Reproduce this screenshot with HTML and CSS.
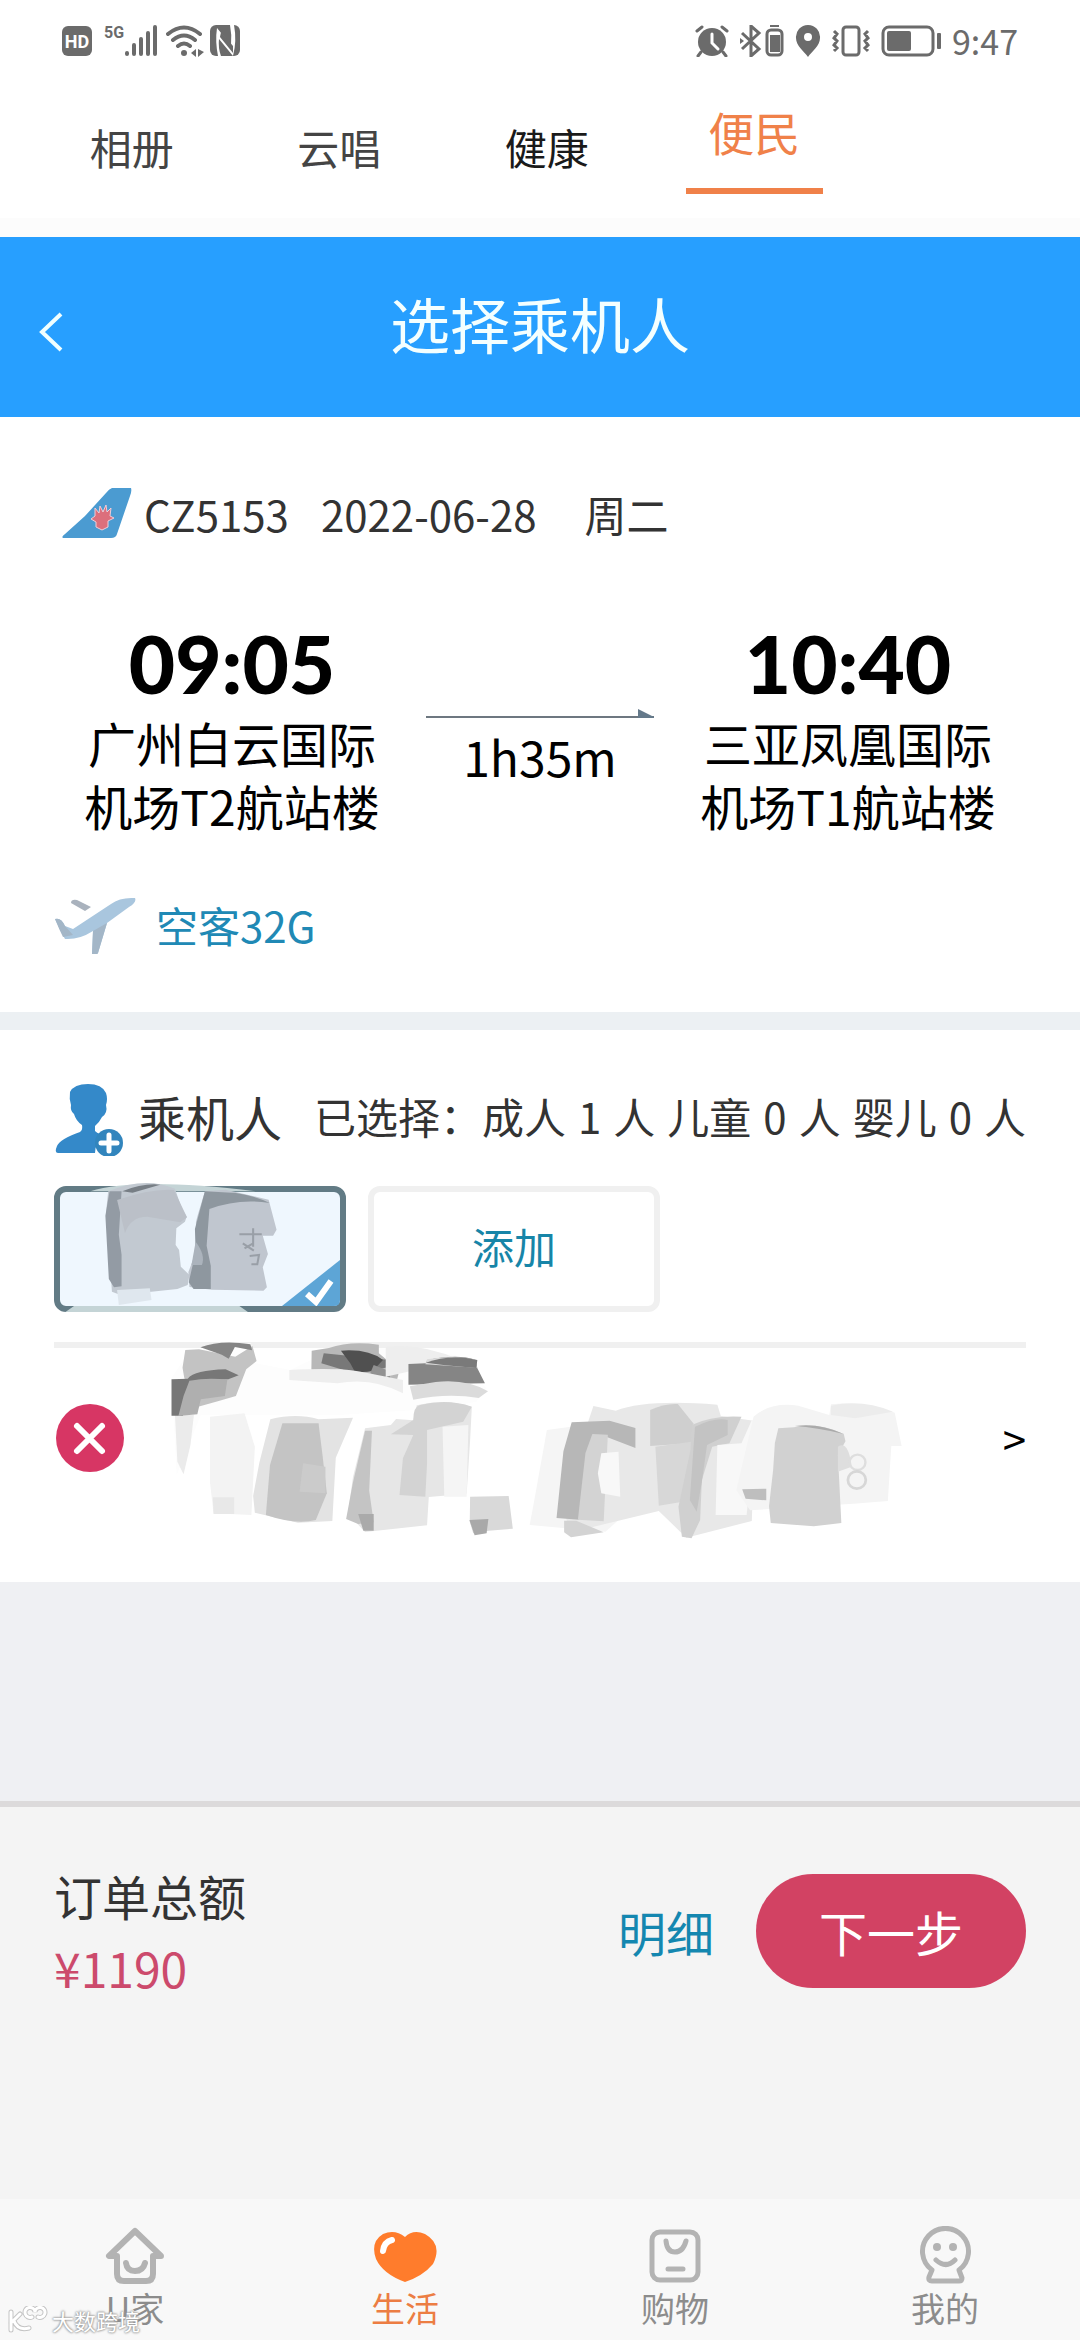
FILE: index.html
```html
<!DOCTYPE html>
<html lang="zh-CN">
<head>
<meta charset="utf-8">
<meta name="viewport" content="width=device-width">
<title>选择乘机人</title>
<link rel="stylesheet" href="styles.css">
</head>
<body>
<div class="status">
  <div class="status-left">
    <span class="hd">HD</span>
    <span class="net">5G</span>
    <svg class="signal" width="34" height="32" viewBox="0 0 34 32"><path d="M3 28v1M10 20v9M17 14v15M24 8v21M31 2v27" fill="none" stroke="#6b6b6b" stroke-width="4" stroke-linecap="round"/></svg>
    <svg class="wifi" width="38" height="32" viewBox="0 0 38 32"><g fill="none" stroke="#6b6b6b" stroke-width="4" stroke-linecap="round"><path d="M2 9Q18-4 34 9M7 15Q18 6 29 15M12 21Q18 16 24 21"/></g><circle cx="18" cy="28" r="3" fill="#6b6b6b"/><path d="M30 24v8l-5-4zM32 24v8l6-5z" fill="#6b6b6b"/></svg>
    <svg width="30" height="32" viewBox="0 0 30 32"><rect width="30" height="31" rx="6" fill="#6b6b6b"/><path d="M8 31Q5 16 7 3l14 17Q22 10 20 0l4 0q3 16-1 31L9 14q-1 9 2 17z" fill="#fff"/><path d="M11 7l12 14v7L10 12z" fill="#6b6b6b"/></svg>
  </div>
  <div class="status-right">
    <svg width="34" height="32" viewBox="0 0 34 32"><circle cx="17" cy="17" r="14" fill="#6b6b6b"/><path d="M2 6l5-4M32 6l-5-4M6 27l-3 4M28 27l3 4" stroke="#6b6b6b" stroke-width="3" stroke-linecap="round"/><path d="M17 9v9l6 6" fill="none" stroke="#fff" stroke-width="3" stroke-linecap="round"/></svg>
    <svg width="44" height="32" viewBox="0 0 44 32"><path d="M2 8l17 16-8 7V1l8 7L2 24" fill="none" stroke="#6b6b6b" stroke-width="3"/><path d="M0 13l4 3-4 3z" fill="#6b6b6b"/><rect x="27" y="5" width="15" height="25" rx="4" fill="none" stroke="#6b6b6b" stroke-width="3"/><path d="M30 1h9M31 11h8v15h-8z" fill="#6b6b6b" stroke="#6b6b6b" stroke-width="2"/></svg>
    <svg width="26" height="32" viewBox="0 0 26 32"><path fill-rule="evenodd" d="M13 0a12 12 0 0 1 12 13c0 8-8 13-12 19C9 26 1 21 1 13A12 12 0 0 1 13 0zm0 8a4 4 0 1 0 0 8 4 4 0 0 0 0-8z" fill="#6b6b6b"/></svg>
    <svg width="38" height="32" viewBox="0 0 38 32"><rect x="11" y="2" width="16" height="28" rx="3" fill="none" stroke="#6b6b6b" stroke-width="3"/><path d="M2 6l3 3-3 4 3 3-3 4 3 3-3 3M36 6l-3 3 3 4-3 3 3 4-3 3 3 3" fill="none" stroke="#6b6b6b" stroke-width="3"/></svg>
    <svg width="60" height="32" viewBox="0 0 60 32"><rect x="2" y="2" width="50" height="28" rx="6" fill="none" stroke="#6b6b6b" stroke-width="3"/><rect x="6" y="6" width="24" height="20" rx="2" fill="#6b6b6b"/><rect x="56" y="8" width="4" height="16" rx="1" fill="#6b6b6b"/></svg>
    <span class="clock">9:47</span>
  </div>
</div>

<nav class="tabs">
  <a class="tab" href="#album">相册</a>
  <a class="tab" href="#sing">云唱</a>
  <a class="tab tab-dark" href="#health">健康</a>
  <a class="tab tab-active" href="#service">便民</a>
</nav>

<header class="header">
  <button class="back" type="button" aria-label="返回"><svg width="26" height="40" viewBox="0 0 26 40"><path d="M23 2L4 20l19 18" fill="none" stroke="#f0ffff" stroke-width="4"/></svg></button>
  <h1>选择乘机人</h1>
</header>

<section class="flight">
  <div class="flight-no">
    <svg width="70" height="50" viewBox="0 0 70 50"><path d="M50 0h19q1 3-1 8L55 46q-1 4-6 4H1q-2-1 2-4l20-18L44 5q3-4 6-5z" fill="#4b9bd1"/><path d="M33 20l4 5 1-7 3 6 3-7 1 7 4-4-1 8 4 2-6 3v6l-6 3-6-3v-5l-5-3 4-3z" fill="#dc6f7c" stroke="#f0cdd8" stroke-width="1"/></svg>
    <span>CZ5153</span><time class="date">2022-06-28</time><span>周二</span>
  </div>
  <div class="route">
    <div class="stop"><strong>09:05</strong><p>广州白云国际<br>机场T2航站楼</p></div>
    <div class="leg">
      <div class="arrow"><svg width="16" height="9" viewBox="0 0 16 9"><path d="M0 0l16 8v1H0z" fill="#64798a"/></svg></div>
      <span>1h35m</span>
    </div>
    <div class="stop"><strong>10:40</strong><p>三亚凤凰国际<br>机场T1航站楼</p></div>
  </div>
  <div class="plane">
    <svg width="82" height="60" viewBox="0 0 82 60"><path d="M17 9q0-4 6-3l14 7-6 4z" fill="#a9b2bd"/><path d="M1 25q6-2 10 7l8 3L57 10Q66 3 81 4q2 4-6 9L53 29 44 59q-3 4-6 1l1-23q-14 9-28 8Q6 36 1 25z" fill="#a9c6de"/><path d="M39 37l14-8-9 30q-3 4-6 1zM1 25q6-2 10 7l8 9-10 2Q5 35 1 25z" fill="#a3b6c7"/></svg>
    <a href="#aircraft">空客32G</a>
  </div>
</section>

<section class="passengers">
  <div class="passenger-head">
    <svg width="70" height="72" viewBox="0 0 70 72"><path d="M16 8Q20 0 34 0t18 9q2 6 0 12 2 8-4 12-3 6-7 9v5q4 4 11 4-11 7-11 18H4Q0 69 3 62q3-7 23-14 3-2 2-7-6-4-8-11-4-3-3-9-2-6-1-13z" fill="#3489c9"/><circle cx="55" cy="59" r="14" fill="#3285bd"/><path d="M55 51v16M47 59h16" stroke="#fff" stroke-width="5" stroke-linecap="round"/></svg>
    <h2>乘机人</h2>
    <p class="summary"><span>已选择：成人</span><span>1</span><span>人</span><span>儿童</span><span>0</span><span>人</span><span>婴儿</span><span>0</span><span>人</span></p>
  </div>
  <div class="cards">
    <button class="card card-on" type="button" aria-label="已选乘机人">
      <svg class="corner" width="58" height="46" viewBox="0 0 58 46"><path d="M58 0v40q0 6-6 6H0z" fill="#5da5d6"/><path d="M25 34l9 8 15-21" fill="none" stroke="#fff" stroke-width="6"/></svg>
      <svg class="smudge" width="292" height="140" viewBox="54 1180 292 140"><g transform="translate(0 1000) scale(.3444 .3333)">
        <path d="M262 574Q400 530 742 574zM190 936l25-18h480l25 18z" fill="#c4d4d6"/>
        <path d="M315 574Q420 528 508 566l10 30 10 30 14 24-5 15-25 20-2 50 10 15 5 50 25 25-5 30-30 12-165 18-25-10-12-190-5-50 6-60z" fill="#c2c9d1"/>
        <path d="M318 574h35l-8 130 8 60v95l-22 3-15-25-10-190z" fill="#939ba4"/><path d="M340 600q100-35 165-30l38 82-20 15-95-17q-50 0-65 50z" fill="#bbc0c8"/><path d="M355 574q60-25 110-20l-80 24z" fill="#777e85"/>
        <path d="M595 574l60-5 125 30 23 90-10 18h-30l15 55-15 40 12 60-10 10-150-3-65-8-3-45 22-60v-90l5-20z" fill="#c0c6cf"/>
        <path d="M595 574l90 5q60 10 98 30-90-15-175 18l-8 110 12 60v70h-50l-14-20 20-90-2-70z" fill="#8e979f"/><path d="M568 725q30 40 18 70h-30z" fill="#abb3bc"/><path d="M695 703h65M705 730l32 22M735 685v55M710 745l25-15M725 768l27-3-5 28h-17" fill="none" stroke="#999fa7" stroke-width="6"/>
        <path d="M340 870l95-5 5 35-95 15z" fill="#dfe7ee"/></g></svg>
    </button>
    <button class="card" type="button">添加</button>
  </div>
  <div class="rule"></div>
  <div class="person">
    <button class="remove" type="button" aria-label="删除"><svg width="70" height="68" viewBox="0 0 70 68"><circle cx="36" cy="34" r="34" fill="#d73664"/><path d="M23 22l25 25M48 22L23 47" stroke="#fff" stroke-width="6" stroke-linecap="round"/></svg></button>
    <a class="more" href="#detail">&gt;</a>
    <svg class="strokes" width="1080" height="240" viewBox="0 22 1080 240">
      <g transform="scale(.3444 .3333)">
        <path d="M498 175l50-80 180-25 15 60 100 20 60-30 100-45 320 30 90 100-30 40-100 20-300 20-400 0-70 180z" fill="#fdfdfd"/>
        <path d="M508 285h55l-10 90-20 88-18-38z" fill="#ebebeb"/><path d="M610 290l100-10 30 100-10 205-110-5-10-90z" fill="#f3f3f3"/><path d="M618 532h62v50h-60z" fill="#e8e8e8"/>
        <path d="M538 90l40-2 105 22 50-32 12 45-30 25-30 80-50 15-70 20-30-90-5-30z" fill="#c3c3c3"/><path d="M582 82q60-24 145-9l5 18-50-10-18 35-20-12z" fill="#858585"/>
        <path d="M498 178l47-2q20-25 110-28l38 18-30 12-95 2-22 50-15 57h-33z" fill="#777"/><path d="M550 182q60-10 110-2l-7 48-70 10-10 45-55 5 15-60z" fill="#afafaf"/>
        <path d="M905 92l50-8q60-22 145-10v26l35 30-8 8 30 24-5 20-60-15-90-20-98 10z" fill="#b8b8b8"/><path d="M940 100l190 20-5 22-60 14-60-4-72-22z" fill="#787878"/><path d="M990 92q80-6 122 28l-30 33-50 5-15-28z" fill="#505050"/><path d="M1085 135l45 18 5 35-60-28z" fill="#919191"/>
        <path d="M840 150q160-10 230 10l100 20v40q-90-50-190-30l-140-10zM1120 80q110-10 215 40l-215 50z" fill="#eee"/>
        <path d="M1186 132l50-2 5-10q90-20 140 0l5 25 22 45-130 2-92 2z" fill="#858585"/><path d="M1240 118q70-12 140 0l5 25-150-10zM1265 186q90-10 152 28l-27 20q-90-15-190 5l-10-40z" fill="#dbdbdb"/>
        <path d="M1236 128q70-26 150-8l-3 24-90-8z" fill="#7a7a7a"/>
        <path d="M785 298q75-20 140 0l100-5-50 120-10 190-100 5-125-30-5-50 18-100z" fill="#e3e3e3"/><path d="M820 310h105l12 100 12 110-32 80q-60 15-145-15l12-150z" fill="#c4c4c4"/><path d="M880 430l65 10v80l-75-5z" fill="#cbcbcb"/>
        <path d="M1060 325l75-10 15-18 50 4 10-45q80-20 160 5l-5 100-10 160-110 10-5 85-180 20-50-55 15-110z" fill="#e6e6e6"/><path d="M1200 300q0-40 20-45 80-20 150 5l-25 45-105 25v100l-5 100-75-5 10-110 30-70-65-2z" fill="#d3d3d3"/><path d="M1060 332h20l-8 180 13 95-45 5-35-15 20-110z" fill="#c4c4c4"/><path d="M1040 582h45v50h-30z" fill="#aaa"/>
        <path d="M1285 320l75-5-5 215h-65z" fill="#f5f5f5"/><path d="M1365 530l112-2 12 98-70 6-45 8-10-35z" fill="#d9d9d9"/><path d="M1363 600l55-3-5 43-35 6z" fill="#a9a9a9"/>
      </g>
      <g transform="translate(540 0) scale(.3444 .3333)">
        <path d="M-20 560l40-230 70-10 160 260-60 55-220-20z" fill="#f5f5f5"/><path d="M220 272q90-35 295-18l10 34 100 15-10 300-190 50-80-80-260 65-20-100 90-280z" fill="#e8e8e8"/>
        <path d="M92 307l110-5 75 22v60l-100-40-22 40-42 215-65-5 20-200z" fill="#b7b7b7"/><path d="M152 342l45 2-12 260-75-5 22-200z" fill="#d3d3d3"/><path d="M70 602h35l80 35-95 15-20-15z" fill="#d3d3d3"/>
        <path d="M320 270q40-20 80-18l45 58-5 60-120 8z" fill="#cfcfcf"/><path d="M335 380l105-15 5 175-100 17z" fill="#d7d7d7"/><path d="M440 315q60-30 145-25l-35 80-50 10-30 100-5 120-25 55-28-5-10-90 35-170z" fill="#d0d0d0"/><path d="M450 320q60-30 95-20v45l-60 30-15 110-15 90-20-35z" fill="#c3c3c3"/>
        <path d="M178 400l50-5 5 135-55-10-10-60zM515 375l70-5 30-70 20 5-20 130-15 150h-90z" fill="#f8f8f8"/>
        <path d="M620 290q50-45 130-33l90 28 5-32q90-10 185 25l20 100h-30l-10 165-100 8-300 20-40-60z" fill="#f4f4f4"/><path d="M845 257q90-20 180 18l-110 20-70-10z" fill="#ececec"/>
        <path d="M587 508l70-2v35l-60-5z" fill="#bebebe"/><path d="M692 325l45-3q70-18 145 20l5 22-22 40 10 205-80 10-125-10-5-50 12-110 5-80z" fill="#d1d1d1"/><path d="M740 318q70-10 142 24-80-20-142-24z" fill="#aaa"/>
        <path d="M865 380q30-20 40 60l-40 15z" fill="#dedede"/><circle cx="922" cy="427" r="23" fill="none" stroke="#dedede" stroke-width="7"/><circle cx="920" cy="480" r="26" fill="none" stroke="#d7d7d7" stroke-width="8"/>
      </g>
    </svg>
  </div>
</section>

<div class="spacer"></div>

<section class="checkout">
  <div class="checkout-row">
    <div class="total"><span>订单总额</span><span class="price">¥1190</span></div>
    <a class="detail" href="#bill">明细</a>
    <button class="next" type="button">下一步</button>
  </div>
</section>

<footer class="footer">
  <nav class="bottom">
    <a href="#home"><svg width="60" height="60" viewBox="0 0 60 60"><path d="M30 5L4 30h8v18q0 7 7 7h22q7 0 7-7V30h8L30 5zM21 37q1 8 9 8t10-8" fill="none" stroke="#b3b3b3" stroke-width="6" stroke-linejoin="round" stroke-linecap="round"/></svg>U家</a>
    <a class="current" href="#life"><svg width="64" height="60" viewBox="0 0 64 60"><path d="M32 11Q40 3 52 8q18 10 8 30Q50 50 32 56 10 48 3 33-3 16 10 8q12-5 22 3z" fill="#ff7c2c"/><path d="M10 25q1-9 9-11" fill="none" stroke="#fff" stroke-width="6" stroke-linecap="round"/></svg>生活</a>
    <a href="#shop"><svg width="60" height="60" viewBox="0 0 60 60"><rect x="7" y="6" width="46" height="48" rx="8" fill="none" stroke="#b3b3b3" stroke-width="5"/><path d="M21 15q1 11 9 11t11-11M23 43h15" fill="none" stroke="#b3b3b3" stroke-width="5" stroke-linecap="round"/></svg>购物</a>
    <a href="#me"><svg width="60" height="60" viewBox="0 0 60 60"><path d="M17 44a23 23 0 1 1 27 0l3 8q0 3-3 3H17q-4 0-3-4zM21 34q10 9 19 0" fill="none" stroke="#b3b3b3" stroke-width="5" stroke-linejoin="round" stroke-linecap="round"/><circle cx="22" cy="21" r="4" fill="#b3b3b3"/><circle cx="38" cy="21" r="4" fill="#b3b3b3"/></svg>我的</a>
  </nav>
  <div class="watermark"><svg width="40" height="28" viewBox="0 0 40 28"><g fill="none" stroke-linecap="round"><path d="M3 6v18M3 17L12 8M6 15q4 10 15 7M24 11a5 5 0 1 1 3-5 5 5 0 1 1 3 5" stroke="#c4c4c4" stroke-width="5"/><path d="M3 6v18M3 17L12 8M6 15q4 10 15 7M24 11a5 5 0 1 1 3-5 5 5 0 1 1 3 5" stroke="#fff" stroke-width="3"/></g></svg><span>大数跨境</span></div>
</footer>
</body>
</html>
```

FILE: styles.css
```css
* { box-sizing: border-box; }

body {
  margin: 0;
  min-height: 100vh;
  display: flex;
  flex-direction: column;
  background: #fff;
  color: #333;
  font-family: "Noto Sans CJK SC", sans-serif;
  font-size: 42px;
}

h1, h2, p { margin: 0; font-weight: 400; }
a { color: inherit; text-decoration: none; }
button { font: inherit; border: 0; padding: 0; background: none; cursor: pointer; }
svg { display: block; flex: none; }

/* system status bar */
.status {
  height: 82px;
  padding: 0 62px;
  display: flex;
  justify-content: space-between;
  align-items: center;
  color: #6b6b6b;
}
.status-left, .status-right { display: flex; align-items: center; }
.status-right { gap: 11px; }
.hd {
  width: 30px;
  height: 30px;
  border-radius: 6px;
  background: #6b6b6b;
  color: #fff;
  font: 700 18px/32px Roboto, sans-serif;
  text-align: center;
}
.net {
  align-self: flex-start;
  margin-left: 12px;
  font: 700 16px/16px "Liberation Sans Narrow", Roboto, sans-serif;
}
.wifi { margin: 0 6px 0 8px; }
.clock { font-size: 34px; line-height: 36px; }

/* channel tabs */
.tabs {
  height: 155px;
  padding: 0 222px 0 28px;
  display: grid;
  grid-template-columns: repeat(4, 1fr);
  justify-items: center;
  align-items: start;
  background: linear-gradient(#fff 136px, #fcfcfc 136px);
  color: #444;
}
.tab { padding-top: 40px; line-height: 50px; }
.tab-dark { color: #1a1a1a; }
.tab-active {
  width: 137px;
  padding: 19px 0 27px;
  border-bottom: 6px solid #f08149;
  color: #f08149;
  font-size: 46px;
  line-height: 60px;
  text-align: center;
}

.header {
  height: 180px;
  padding: 0 38px;
  display: grid;
  grid-template-columns: 26px 1fr 26px;
  align-items: center;
  background: #279fff;
  color: #f4ffff;
}
.back { padding-top: 10px; }
.header h1 { padding-bottom: 8px; font-size: 60px; line-height: 80px; text-align: center; }

/* flight */
.flight { padding: 66px 54px 58px; }
.flight-no { display: flex; align-items: center; padding-left: 8px; height: 60px; }
.flight-no svg { margin-right: 12px; }
.date { margin: 0 48px 0 32px; }
.route {
  margin-top: 68px;
  display: grid;
  grid-template-columns: 1fr 228px 1fr;
  column-gap: 16px;
  color: #000;
  font-size: 48px;
  text-align: center;
}
.stop strong { display: block; padding-top: 4px; font: 900 80px/96px Lato, sans-serif; }
.stop p { line-height: 63px; }
.leg { padding-top: 98px; }
.arrow { display: flex; justify-content: flex-end; border-bottom: 2px solid #6d7780; margin-bottom: 8px; height: 9px; }
.leg span { display: block; line-height: 60px; }
.plane { display: flex; align-items: center; gap: 20px; height: 60px; margin-top: 57px; color: #2089b5; }

/* passengers */
.passengers { border-top: 18px solid #ecf0f3; padding-top: 54px; }
.passenger-head { padding: 0 54px; display: flex; align-items: flex-start; line-height: 64px; }
.passenger-head h2 { margin-left: 14px; font-size: 48px; line-height: 64px; }
.summary { margin-left: auto; display: flex; gap: 12px; white-space: nowrap; }
.cards { display: flex; gap: 22px; padding: 30px 54px; }
.card {
  position: relative;
  width: 292px;
  height: 126px;
  padding-bottom: 8px;
  border: 6px solid #f0f0f0;
  border-radius: 12px;
  color: #1785a8;
}
.card-on { border-color: #627b85; background: #eff7fe; }
.corner { position: absolute; right: 0; bottom: 0; }
.smudge { position: absolute; left: -6px; top: -12px; }
.rule { margin: 0 54px; height: 6px; background: #f0f0f0; }
.person {
  position: relative;
  padding: 56px 54px 110px;
  display: flex;
  justify-content: space-between;
  align-items: center;
}
.more { color: #000; line-height: 60px; }
.strokes { position: absolute; left: 0; top: -6px; pointer-events: none; }

.spacer { height: 219px; background: #eff0f3; }

/* order total */
.checkout { flex: 1; border-top: 6px solid #dcdadb; background: #f4f4f4; padding: 52px 54px; font-size: 48px; }
.checkout-row { display: flex; align-items: center; }
.total { display: flex; flex-direction: column; line-height: 72px; margin-right: auto; }
.price { color: #cc4a6c; }
.detail { color: #1487b0; margin-right: 42px; }
.next { width: 270px; height: 114px; border-radius: 57px; background: #d24263; color: #fff; }

/* bottom navigation */
.footer { position: relative; background: #f8f8f8; padding: 27px 0 12px; }
.bottom { display: grid; grid-template-columns: repeat(4, 1fr); color: #8c8c8c; font-size: 34px; line-height: 40px; }
.bottom a { display: flex; flex-direction: column; align-items: center; gap: 2px; }
.bottom .current { color: #ec7d43; }
.watermark {
  position: absolute;
  left: 8px;
  bottom: 4px;
  display: flex;
  align-items: center;
  gap: 4px;
  color: #fff;
  font-size: 22px;
  line-height: 32px;
  text-shadow: 0 0 2px #999, 0 0 2px #999, 0 0 3px #aaa;
}
```
